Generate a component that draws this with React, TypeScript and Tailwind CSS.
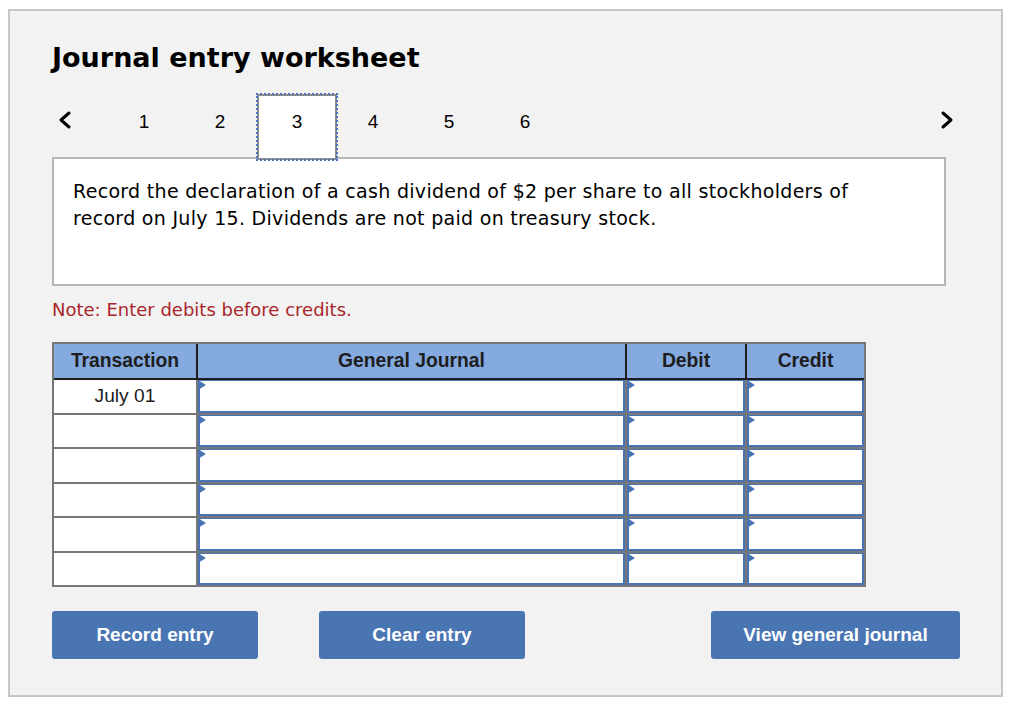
import React from "react";

const steps = [1, 2, 3, 4, 5, 6];
const rows = ["July 01", "", "", "", "", ""];

function Chevron({ dir }: { dir: "left" | "right" }) {
  return (
    <svg width="16" height="20" viewBox="0 0 16 20" className="block">
      <path
        d={dir === "left" ? "M12 3 L4 10 L12 17" : "M4 3 L12 10 L4 17"}
        fill="none"
        stroke="#000"
        strokeWidth="3"
        strokeLinecap="round"
        strokeLinejoin="round"
      />
    </svg>
  );
}

function InputCell() {
  return (
    <div className="relative h-full bg-white border-x-2 border-b-2 border-t border-[#4a73b5]">
      <span className="absolute left-[-2px] top-[-1px] w-0 h-0 border-y-[5px] border-y-transparent border-l-[8px] border-l-[#4a73b5]" />
    </div>
  );
}

export default function App() {
  return (
    <div className="w-[1024px] h-[706px] bg-white pt-[9px] pl-[8px]">
      <div className="w-[995px] h-[688px] border-2 border-[#c6c6c6] bg-[#f2f2f2] pl-[42px] pt-[29px]">
        {/* Title */}
        <h1 className="font-['DejaVu_Sans',sans-serif] font-bold text-[27px] leading-[36px] text-black">
          Journal entry worksheet
        </h1>

        {/* Step navigation */}
        <div className="relative z-10 mt-[18px] -mb-[3px] flex items-start w-[903px] h-[66px]">
          <div className="w-[54px] pt-[16px] pl-[5px]">
            <Chevron dir="left" />
          </div>
          {steps.map((s) =>
            s === 3 ? (
              <div
                key={s}
                className="w-[80px] ml-[-1px] mr-[-2px] h-[66px] bg-white border-2 border-[#8c8c8c] outline-2 outline-dotted outline-[#4a73c0] -outline-offset-[1px] flex justify-center pt-[14px] font-['Liberation_Sans',sans-serif] text-[19px] leading-[24px] text-black"
              >
                {s}
              </div>
            ) : (
              <div
                key={s}
                className="w-[76px] h-[66px] flex justify-center pt-[16px] font-['Liberation_Sans',sans-serif] text-[19px] leading-[24px] text-black"
              >
                {s}
              </div>
            )
          )}
          <div className="ml-auto pt-[16px]">
            <Chevron dir="right" />
          </div>
        </div>

        {/* Description */}
        <div className="w-[894px] h-[129px] bg-white border-2 border-[#b5b5b5] pl-[19px] pt-[19px] font-['DejaVu_Sans',sans-serif] text-[19px] tracking-[0.3px] leading-[27px] text-black">
          Record the declaration of a cash dividend of $2 per share to all stockholders of
          <br />
          record on July 15. Dividends are not paid on treasury stock.
        </div>

        <p className="mt-[11px] font-['DejaVu_Sans',sans-serif] text-[18px] leading-[26px] text-[#a9262a]">
          Note: Enter debits before credits.
        </p>

        {/* Journal table */}
        <div className="mt-[19px] w-[814px] border-2 border-[#777] bg-[#777] font-['Liberation_Sans',sans-serif]">
          <div className="grid grid-cols-[142px_427px_118px_117px] gap-x-[2px] bg-[#1e1e1e] border-b-2 border-[#1e1e1e]">
            {["Transaction", "General Journal", "Debit", "Credit"].map((h) => (
              <div
                key={h}
                className="h-[34px] bg-[#84aadf] flex items-center justify-center font-bold text-[19.3px] text-[#1e1e1e]"
              >
                {h}
              </div>
            ))}
          </div>
          <div className="grid grid-cols-[142px_427px_118px_117px] gap-x-[2px] gap-y-[2px] auto-rows-[32.5px]">
            {rows.map((r, i) => (
              <React.Fragment key={i}>
                <div className="bg-white flex items-center justify-center text-[19.2px] text-[#1e1e1e]">
                  {r}
                </div>
                <InputCell />
                <InputCell />
                <InputCell />
              </React.Fragment>
            ))}
          </div>
        </div>

        {/* Actions */}
        <div className="mt-[24px] flex w-[908px] font-['Liberation_Sans',sans-serif]">
          <button className="w-[206px] h-[48px] rounded-[3px] bg-[#4a75b3] text-white font-bold text-[19px]">
            Record entry
          </button>
          <button className="ml-[61px] w-[206px] h-[48px] rounded-[3px] bg-[#4a75b3] text-white font-bold text-[19px]">
            Clear entry
          </button>
          <button className="ml-auto w-[249px] h-[48px] rounded-[3px] bg-[#4a75b3] text-white font-bold text-[19px]">
            View general journal
          </button>
        </div>
      </div>
    </div>
  );
}
